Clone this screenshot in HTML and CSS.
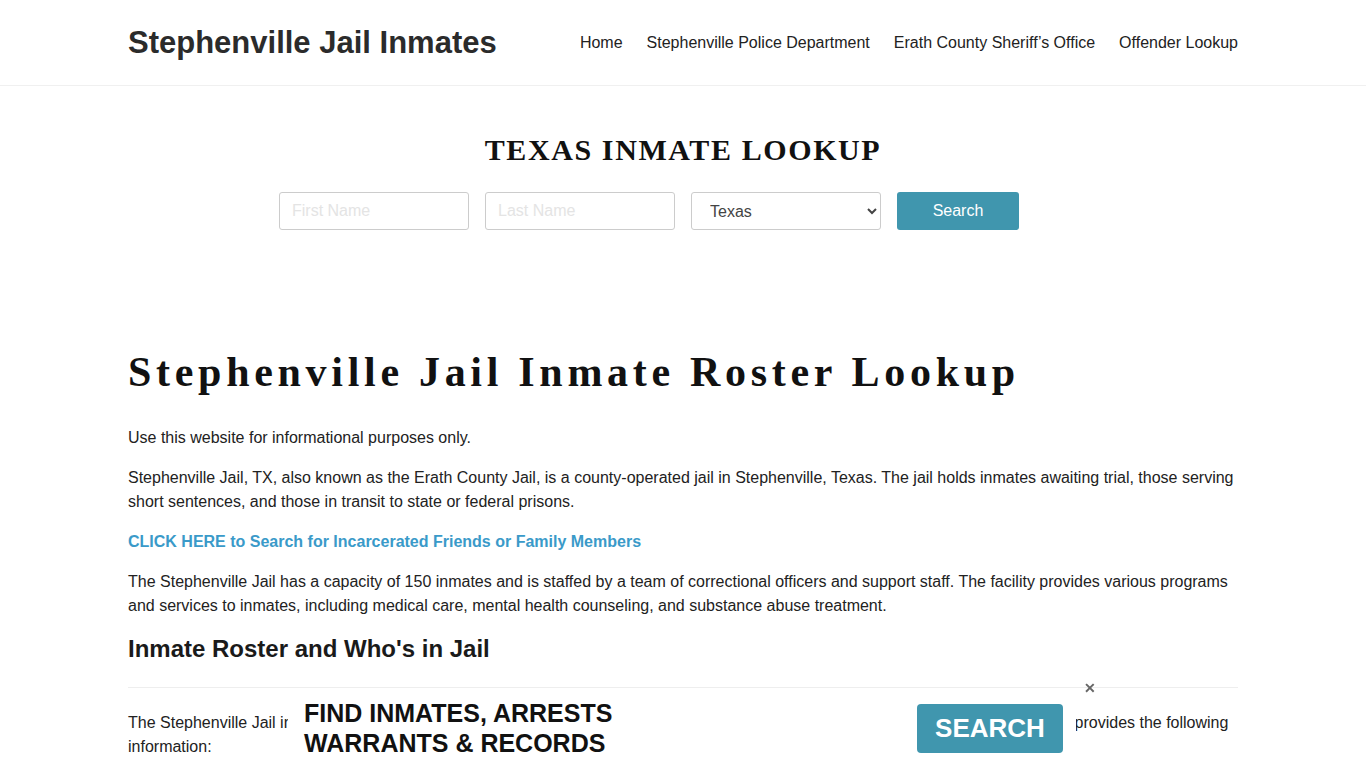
FILE: index.html
```html
<!DOCTYPE html>
<html lang="en">
<head>
  <meta charset="UTF-8">
  <meta name="viewport" content="width=device-width, initial-scale=1.0">
  <title>Stephenville Jail Inmates</title>
  <link rel="stylesheet" href="styles.css">
</head>
<body>
  <header class="site-header">
    <div class="container header-row">
      <a class="brand" href="#">Stephenville Jail Inmates</a>
      <nav class="nav">
        <a href="#">Home</a>
        <a href="#">Stephenville Police Department</a>
        <a href="#">Erath County Sheriff’s Office</a>
        <a href="#">Offender Lookup</a>
      </nav>
    </div>
  </header>

  <section class="lookup">
    <h2 class="lookup-title">TEXAS INMATE LOOKUP</h2>
    <form class="lookup-form">
      <input type="text" placeholder="First Name">
      <input type="text" placeholder="Last Name">
      <select><option>Texas</option></select>
      <button type="submit">Search</button>
    </form>
  </section>

  <main class="container content">
    <h1 class="page-title">Stephenville Jail Inmate Roster Lookup</h1>
    <p>Use this website for informational purposes only.</p>
    <p>Stephenville Jail, TX, also known as the Erath County Jail, is a county-operated jail in Stephenville, Texas. The jail holds inmates awaiting trial, those serving short sentences, and those in transit to state or federal prisons.</p>
    <p><a class="cta" href="#">CLICK HERE to Search for Incarcerated Friends or Family Members</a></p>
    <p>The Stephenville Jail has a capacity of 150 inmates and is staffed by a team of correctional officers and support staff. The facility provides various programs and services to inmates, including medical care, mental health counseling, and substance abuse treatment.</p>
    <h3 class="section-title">Inmate Roster and Who's in Jail</h3>
    <hr>
    <p>The Stephenville Jail inmate roster is the list of all inmates currently held in the facility, and it is updated on a regular basis. The roster provides the following information:</p>
  </main>

  <div class="ad-bar">
    <div class="ad-text">FIND INMATES, ARRESTS<br>WARRANTS &amp; RECORDS</div>
    <a class="ad-btn" href="#">SEARCH</a>
    <span class="ad-close">✕</span>
  </div>
</body>
</html>
```

FILE: styles.css
```css
body { margin: 0; font-family: "Liberation Sans", Arial, sans-serif; color: #222; background: #fff; }
.container { width: 1110px; margin: 0 auto; }
a { text-decoration: none; }

.site-header { border-bottom: 1px solid #f0f0f0; }
.header-row { display: flex; justify-content: space-between; align-items: center; height: 85px; }
.brand { font-size: 31px; font-weight: bold; color: #2b2b2b; }
.nav { display: flex; gap: 24px; }
.nav a { font-size: 16px; color: #222; }

.lookup { padding-top: 47px; height: 253px; box-sizing: border-box; }
.lookup-title { margin: 0 0 25px; text-align: center; font-family: "Liberation Serif", "Times New Roman", serif; font-size: 30px; letter-spacing: 1.6px; color: #111; line-height: 34px; }
.lookup-form { display: flex; justify-content: center; gap: 16px; padding-right: 68px; }
.lookup-form input, .lookup-form select { width: 190px; height: 38px; box-sizing: border-box; border: 1px solid #ccc; border-radius: 3px; padding: 0 12px; font-size: 16px; font-family: inherit; background: #fff; color: #444; }
.lookup-form input::placeholder { color: #e4e4e4; }
.lookup-form select { padding-left: 14px; }
.lookup-form button { width: 122px; height: 38px; border: none; border-radius: 3px; background: #4096ae; color: #fff; font-size: 16px; font-family: inherit; }

.content { padding-top: 8px; }
.page-title { margin: 0 0 29px; font-family: "Liberation Serif", "Times New Roman", serif; font-size: 42px; letter-spacing: 4.7px; line-height: 50px; color: #111; }
.content p { margin: 0 0 16px; font-size: 16px; line-height: 24px; }
.cta { color: #3a9ac9; font-weight: bold; }
.section-title { margin: 17px 0 0; font-size: 24px; line-height: 28px; color: #1a1a1a; }
.content hr { border: none; border-top: 1px solid #eee; margin: 24px 0 23px; }

.ad-bar { position: fixed; left: 288px; bottom: 0; width: 788px; height: 73px; background: #fff; display: flex; align-items: center; justify-content: space-between; padding: 0 13px 0 16px; box-sizing: border-box; }
.ad-text { font-size: 25px; font-weight: bold; line-height: 30px; color: #111; margin-top: -8px; }
.ad-btn { background: #4096ae; color: #fff; font-size: 26px; font-weight: bold; width: 146px; height: 49px; border-radius: 4px; display: flex; align-items: center; justify-content: center; margin-top: -6px; }
.ad-close { position: absolute; right: -20px; top: -15px; font-size: 14px; font-weight: bold; color: #666; }
```
